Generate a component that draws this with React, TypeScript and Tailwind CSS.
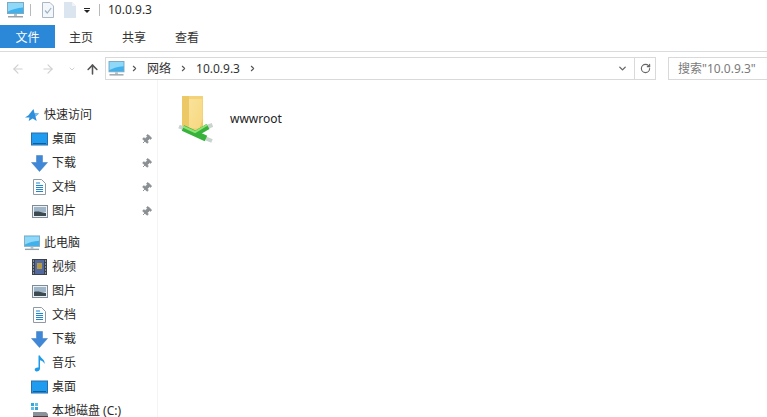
import type { ReactNode } from "react";
import { ArrowLeft, ArrowRight, ArrowUp, ChevronDown, ChevronRight, Pin, RotateCw } from "lucide-react";

const font = "font-['Noto_Sans','Noto_Sans_CJK_SC',sans-serif]";

function Monitor({ className = "h-[16px] w-[17px]" }: { className?: string }) {
  return (
    <svg viewBox="0 0 17 16" className={className}>
      <rect x="0.5" y="0.5" width="16" height="11" fill="#3fb2ee" stroke="#7fa9bf" />
      <path d="M1 1h15v4.500C10 6 5 7.500 1 9.500z" fill="#8fd8f8" />
      <rect x="7" y="12" width="3" height="2" fill="#b4c0c8" />
      <rect x="1" y="14" width="15" height="1.500" fill="#97a3ab" />
    </svg>
  );
}

function Desktop() {
  return (
    <svg viewBox="0 0 17 14" className="h-[14px] w-[17px]">
      <rect x="0.5" y="1" width="16" height="12" fill="#1f9cf0" stroke="#2a6fa8" />
      <rect x="2" y="11" width="13" height="1" fill="#0d5f9e" />
    </svg>
  );
}

function Download() {
  return (
    <svg viewBox="0 0 17 17" className="h-[17px] w-[17px]">
      <path d="M5.5 0.5h6v7h5L8.500 16.500 0.500 7.500h5z" fill="#3f88d8" stroke="#3b78bd" strokeWidth="0.5" />
    </svg>
  );
}

function Doc() {
  return (
    <svg viewBox="0 0 13 16" className="h-[16px] w-[13px]">
      <path d="M0.500 0.500h8l4 4v11h-12z" fill="#fdfdfd" stroke="#8f9aa5" />
      <path d="M3 4h4M3 6.500h7M3 8.500h7M3 10.500h7M3 12.500h7" stroke="#1f86d0" strokeWidth="1" />
    </svg>
  );
}

function Picture() {
  return (
    <svg viewBox="0 0 16 13" className="h-[13px] w-[16px]">
      <rect x="0.500" y="0.500" width="15" height="12" fill="#eef1f3" stroke="#7f8c97" />
      <rect x="2" y="2" width="12" height="5" fill="#9fb6c8" />
      <path d="M2 7c3-1 6 0 12 1v3H2z" fill="#3d4a52" />
    </svg>
  );
}

function Video() {
  return (
    <svg viewBox="0 0 15 16" className="h-[16px] w-[15px]">
      <rect width="15" height="16" fill="#39424c" />
      <rect x="3" y="1" width="9" height="14" fill="#5468a0" />
      <path d="M5 4h5v6H5z" fill="#b59a42" />
      <path d="M1 2h1M1 5h1M1 8h1M1 11h1M1 14h1M13 2h1M13 5h1M13 8h1M13 11h1M13 14h1" stroke="#e6e6e6" />
    </svg>
  );
}

function Music() {
  return (
    <svg viewBox="0 0 12 17" className="h-[17px] w-[12px]">
      <path d="M4.500 0.500h1.500c0.500 3 5.500 4 4.500 8.500-0.500-2-2.500-3.500-4.500-3.800V13.500c0 2-2 3.300-3.800 3-1.800-0.400-2-2.300-0.600-3.400 0.900-0.700 2-0.900 2.900-0.500z" fill="#1d9bea" />
    </svg>
  );
}

function Disk() {
  return (
    <svg viewBox="0 0 17 16" className="h-[16px] w-[17px]">
      <rect x="0" y="0" width="3" height="3" fill="#34a5d8" />
      <rect x="4" y="0" width="3" height="3" fill="#5cc0e8" />
      <rect x="0" y="4" width="3" height="3" fill="#5cc0e8" />
      <rect x="4" y="4" width="3" height="3" fill="#34a5d8" />
      <path d="M2 9h13l2 2v5H2z" fill="#8b9297" />
      <rect x="2" y="13" width="15" height="3" fill="#3d4347" />
    </svg>
  );
}

function QuickStar() {
  return (
    <svg viewBox="0 0 14 13" className="h-[13px] w-[14px]">
      <path d="M8.500 0l1 4.200 4.500 0.300-3.500 2.900 1.200 4.600-4-2.500-4 2.500 0.800-3.600H0l3.500-2.100L5 4.300z" fill="#2f8fdc" />
      <path d="M8.500 0l1 4.200 4.500 0.300-3.500 2.900z" fill="#72bff0" />
    </svg>
  );
}

function ToolbarCheckDoc() {
  return (
    <svg viewBox="0 0 12 16" className="h-[16px] w-[12px]">
      <path d="M0.500 0.500h7.500l3.500 3.500v11.500h-11z" fill="#f4f7fa" stroke="#a9b7c6" />
      <path d="M3 8.500l2.200 2.500 4-5" fill="none" stroke="#9db1c4" strokeWidth="1.200" />
    </svg>
  );
}

function ToolbarBlankDoc() {
  return (
    <svg viewBox="0 0 12 16" className="h-[16px] w-[12px]">
      <path d="M0 0h8l4 4v12H0z" fill="#dbe5f0" />
      <path d="M8 0l4 4H8z" fill="#eef3f8" />
    </svg>
  );
}

function SharedFolder() {
  return (
    <svg viewBox="0 0 36 48" className="h-[48px] w-[36px]">
      <defs>
        <linearGradient id="folderFront" x1="0" x2="1" y1="0" y2="1">
          <stop offset="0" stopColor="#fae29a" />
          <stop offset="1" stopColor="#f6d880" />
        </linearGradient>
      </defs>
      <path d="M5 0h21v34H5z" fill="#f3d27a" />
      <path d="M5 0h7v30l-7 4z" fill="#ecc867" />
      <path d="M12 3h13v29H12z" fill="url(#folderFront)" />
      <path d="M26 22v12h-4z" fill="#f0c860" />
      {/* network pipes */}
      <path d="M2 30.500L7 32.500" stroke="#c9d4d0" strokeWidth="4" />
      <path d="M30 31L35.500 29" stroke="#c9d4d0" strokeWidth="4" />
      <path d="M29 42.500L35 45" stroke="#c9d4d0" strokeWidth="4" />
      <path d="M6 32L29 42.500" stroke="#37b23a" strokeWidth="6" />
      <path d="M18 38L31 30.500" stroke="#37b23a" strokeWidth="6" />
      <path d="M6 30.500L18 36 30 29" fill="none" stroke="#8fe275" strokeWidth="2" />
    </svg>
  );
}

type NavRowProps = {
  icon: ReactNode;
  label: string;
  pinned?: boolean;
  top?: boolean;
};

function NavRow({ icon, label, pinned, top }: NavRowProps) {
  return (
    <div className={`flex h-6 items-center ${top ? "pl-[24px]" : "pl-[31px]"}`}>
      <span className={`flex shrink-0 items-center justify-center ${top ? "w-[16px]" : "w-[17px]"}`}>{icon}</span>
      <span className="ml-[4px] flex-1 whitespace-nowrap text-[12px] leading-none text-[#2b2b2b]">{label}</span>
      {pinned && <Pin className="mr-[5px] h-[11px] w-[11px] rotate-45 fill-[#8a8f94] text-[#8a8f94]" />}
    </div>
  );
}

const quickAccess = [
  { label: "桌面", icon: <Desktop /> },
  { label: "下载", icon: <Download /> },
  { label: "文档", icon: <Doc /> },
  { label: "图片", icon: <Picture /> },
];

const thisPc = [
  { label: "视频", icon: <Video /> },
  { label: "图片", icon: <Picture /> },
  { label: "文档", icon: <Doc /> },
  { label: "下载", icon: <Download /> },
  { label: "音乐", icon: <Music /> },
  { label: "桌面", icon: <Desktop /> },
  { label: "本地磁盘 (C:)", icon: <Disk /> },
];

export default function App() {
  return (
    <div className={`flex h-[417px] w-[767px] flex-col overflow-hidden bg-white ${font}`}>
      {/* title bar */}
      <div className="flex h-[25px] shrink-0 items-center pb-[5px] pl-[7px]">
        <Monitor />
        <span className="ml-[6px] h-[12px] w-px bg-[#b9b9b9]" />
        <span className="ml-[11px]"><ToolbarCheckDoc /></span>
        <span className="ml-[10px]"><ToolbarBlankDoc /></span>
        <span className="ml-[8px] flex flex-col items-center gap-px">
          <span className="h-px w-[6px] bg-[#222]" />
          <span className="h-0 w-0 border-x-[3px] border-t-[3px] border-x-transparent border-t-[#222]" />
        </span>
        <span className="ml-[9px] h-[12px] w-px bg-[#b9b9b9]" />
        <span className="ml-[8px] text-[12px] leading-none text-[#2b2b2b]">10.0.9.3</span>
      </div>

      {/* ribbon tabs */}
      <div className="flex h-[27px] shrink-0 border-b border-[#dadbdc] pb-[3px]">
        <div className="flex h-[23px] w-[55px] items-center justify-center bg-[#2b88d8] pt-[2px] text-[12px] text-white">文件</div>
        <div className="flex items-center gap-[29px] pl-[14px] pt-[2px] text-[12px] text-[#333]">
          <span>主页</span>
          <span>共享</span>
          <span>查看</span>
        </div>
      </div>

      {/* address row */}
      <div className="flex h-[28px] shrink-0 items-end pl-[11px]">
        <ArrowLeft className="mb-[4px] h-[14px] w-[14px] text-[#d0d0d0]" />
        <ArrowRight className="mb-[4px] ml-[16px] h-[14px] w-[14px] text-[#d0d0d0]" />
        <ChevronDown className="mb-[7px] ml-[13px] h-[8px] w-[8px] text-[#d0d0d0]" strokeWidth={3} />
        <ArrowUp className="mb-[3px] ml-[9px] h-[15px] w-[15px] text-[#555]" strokeWidth={2.5} />
        <div className="ml-[5px] flex h-[23px] w-[551px] items-center border border-[#d9d9d9] pl-[2px]">
          <Monitor className="h-[15px] w-[17px]" />
          <ChevronRight className="ml-[5px] h-[9px] w-[9px] text-[#555]" strokeWidth={3} />
          <span className="ml-[8px] text-[12px] leading-none text-[#333]">网络</span>
          <ChevronRight className="ml-[8px] h-[9px] w-[9px] text-[#555]" strokeWidth={3} />
          <span className="ml-[8px] text-[12px] leading-none text-[#333]">10.0.9.3</span>
          <ChevronRight className="ml-[8px] h-[9px] w-[9px] text-[#555]" strokeWidth={3} />
          <ChevronDown className="ml-auto mr-[3px] h-[11px] w-[11px] text-[#666]" strokeWidth={3} />
          <span className="ml-[3px] flex h-full w-[21px] items-center justify-center border-l border-[#d9d9d9]">
            <RotateCw className="h-[11px] w-[11px] text-[#666]" strokeWidth={2.5} />
          </span>
        </div>
        <div className="ml-[12px] flex h-[23px] flex-1 items-center border border-r-0 border-[#d9d9d9] pl-[9px] text-[12px] leading-none whitespace-nowrap text-[#7a7a7a]">
          搜索"10.0.9.3"
        </div>
      </div>

      {/* body */}
      <div className="flex min-h-0 flex-1">
        <nav className="w-[158px] shrink-0 border-r border-[#f4f4f4] pt-[23px]">
          <NavRow top label="快速访问" icon={<QuickStar />} />
          {quickAccess.map((item) => (
            <NavRow key={item.label} label={item.label} icon={item.icon} pinned />
          ))}
          <div className="h-2" />
          <NavRow top label="此电脑" icon={<Monitor />} />
          {thisPc.map((item) => (
            <NavRow key={item.label} label={item.label} icon={item.icon} />
          ))}
        </nav>

        <main className="flex-1 pl-[19px] pt-[16px]">
          <div className="flex items-start">
            <SharedFolder />
            <span className="ml-[17px] mt-[15px] text-[12px] leading-[16px] text-[#222]">wwwroot</span>
          </div>
        </main>
      </div>
    </div>
  );
}
